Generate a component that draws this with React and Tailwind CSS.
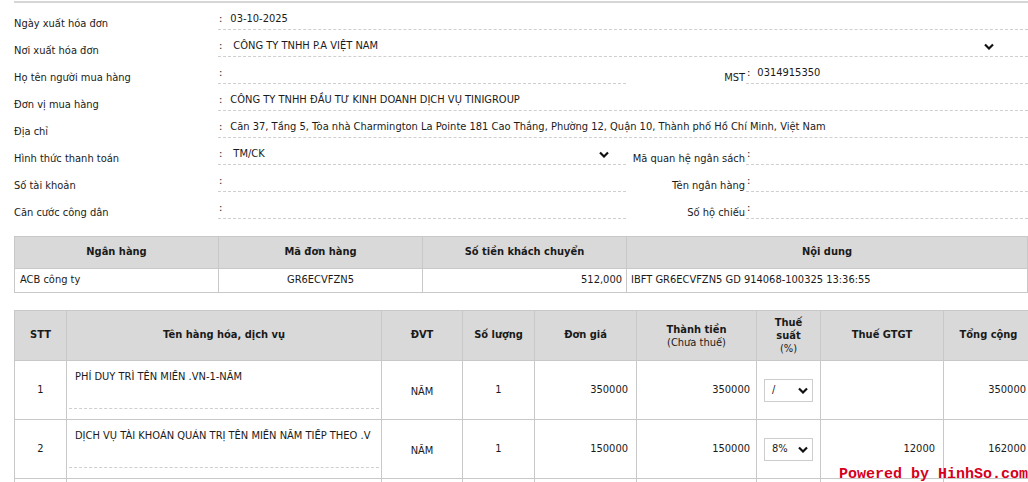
import React from "react";

const font = { fontFamily: '"DejaVu Sans Condensed", "Liberation Sans", sans-serif' };

function Chevron({ className = "" }) {
  return (
    <svg width="10" height="7" viewBox="0 0 10 7" className={className}>
      <path d="M1 1.5 L5 5.5 L9 1.5" fill="none" stroke="#111" strokeWidth="2.2" />
    </svg>
  );
}

function Label({ children, right }) {
  return (
    <div
      className={
        "shrink-0 pt-[14px] leading-[14px] whitespace-nowrap " +
        (right ? "w-[120px] text-right pr-[1px]" : "w-[204px]")
      }
    >
      {children}
    </div>
  );
}

function Value({ children, className = "", select, colonGap = "ml-[8px]" }) {
  return (
    <div
      className={
        "relative flex items-start pt-[9px] leading-[14px] border-b border-dashed border-[#cfcfcf] h-[27px] whitespace-nowrap " +
        className
      }
    >
      <span className="pl-[1px]">:</span>
      {children && <span className={colonGap}>{children}</span>}
      {select && <Chevron className={"absolute top-[13px] " + select} />}
    </div>
  );
}

function FormRow({ label, children }) {
  return (
    <div className="flex h-[27px]">
      <Label>{label}</Label>
      {children}
    </div>
  );
}

export default function App() {
  const head = "bg-[#d9d9d9] border border-[#c8c8c8] font-bold text-center";
  const cell = "border border-[#c8c8c8]";
  return (
    <div className="w-[1028px] h-[482px] overflow-hidden bg-white text-[11px] text-[#1a1a1a] relative" style={font}>
      <div className="w-[1040px] pl-[14px]">
        <div className="mt-px border-t-2 border-[#d6d6d6]">
          <FormRow label="Ngày xuất hóa đơn">
            <Value className="w-[810px]">03-10-2025</Value>
          </FormRow>
          <FormRow label="Nơi xuất hóa đơn">
            <Value className="w-[810px]" colonGap="ml-[11px]" select="left-[766px]">
              CÔNG TY TNHH P.A VIỆT NAM
            </Value>
          </FormRow>
          <FormRow label="Họ tên người mua hàng">
            <Value className="w-[408px]" />
            <Label right>MST</Label>
            <Value className="w-[282px]" colonGap="ml-[7px]">0314915350</Value>
          </FormRow>
          <FormRow label="Đơn vị mua hàng">
            <Value className="w-[810px]">CÔNG TY TNHH ĐẦU TƯ KINH DOANH DỊCH VỤ TINIGROUP</Value>
          </FormRow>
          <FormRow label="Địa chỉ">
            <Value className="w-[810px]">
              Căn 37, Tầng 5, Tòa nhà Charmington La Pointe 181 Cao Thắng, Phường 12, Quận 10, Thành phố Hồ Chí Minh, Việt Nam
            </Value>
          </FormRow>
          <FormRow label="Hình thức thanh toán">
            <Value className="w-[408px]" colonGap="ml-[11px]" select="left-[381px]">TM/CK</Value>
            <Label right>Mã quan hệ ngân sách</Label>
            <Value className="w-[282px]" />
          </FormRow>
          <FormRow label="Số tài khoản">
            <Value className="w-[408px]" />
            <Label right>Tên ngân hàng</Label>
            <Value className="w-[282px]" />
          </FormRow>
          <FormRow label="Căn cước công dân">
            <Value className="w-[408px]" />
            <Label right>Số hộ chiếu</Label>
            <Value className="w-[282px]" />
          </FormRow>
        </div>

        <table className="mt-[17px] w-[1014px] border-collapse">
          <colgroup>
            <col className="w-[204px]" />
            <col className="w-[204px]" />
            <col className="w-[204px]" />
            <col />
          </colgroup>
          <thead>
            <tr className="h-[32px]">
              <th className={head}>Ngân hàng</th>
              <th className={head}>Mã đơn hàng</th>
              <th className={head}>Số tiền khách chuyển</th>
              <th className={head}>Nội dung</th>
            </tr>
          </thead>
          <tbody>
            <tr className="h-[24px]">
              <td className={cell + " px-[5px]"}>ACB công ty</td>
              <td className={cell + " text-center"}>GR6ECVFZN5</td>
              <td className={cell + " text-right px-[4px]"}>512,000</td>
              <td className={cell + " px-[4px]"}>IBFT GR6ECVFZN5 GD 914068-100325 13:36:55</td>
            </tr>
          </tbody>
        </table>

        <table className="mt-[17px] w-[1020px] border-collapse">
          <colgroup>
            <col className="w-[52px]" />
            <col className="w-[315px]" />
            <col className="w-[81px]" />
            <col className="w-[72px]" />
            <col className="w-[102px]" />
            <col className="w-[120px]" />
            <col className="w-[63px]" />
            <col className="w-[123px]" />
            <col />
          </colgroup>
          <thead>
            <tr className="h-[50px]">
              <th className={head}>STT</th>
              <th className={head}>Tên hàng hóa, dịch vụ</th>
              <th className={head}>ĐVT</th>
              <th className={head}>Số lượng</th>
              <th className={head}>Đơn giá</th>
              <th className={head + " leading-[13px]"}>
                Thành tiền
                <div className="font-normal">(Chưa thuế)</div>
              </th>
              <th className={head + " leading-[13px]"}>
                Thuế
                <br />
                suất
                <div className="font-normal">(%)</div>
              </th>
              <th className={head}>Thuế GTGT</th>
              <th className={head}>Tổng cộng</th>
            </tr>
          </thead>
          <tbody>
            {[
              ["1", "PHÍ DUY TRÌ TÊN MIỀN .VN-1-NĂM", "350000", "350000", "/", "", "350000"],
              ["2", "DỊCH VỤ TÀI KHOẢN QUẢN TRỊ TÊN MIỀN NĂM TIẾP THEO .V", "150000", "150000", "8%", "12000", "162000"],
              ["", "", "", "", "", "", ""],
            ].map((r, i) => (
              <tr key={i} className="h-[59px]">
                <td className={cell + " text-center"}>{r[0]}</td>
                <td className={cell + " align-top px-[2px] pt-[9px]"}>
                  {i < 2 ? (
                    <div className="h-[39px] border-b border-dashed border-[#cfcfcf] px-[6px] leading-[14px] whitespace-nowrap overflow-hidden">
                      {r[1]}
                    </div>
                  ) : null}
                </td>
                <td className={cell + " text-center pt-[4px]"}>{i < 2 ? "NĂM" : ""}</td>
                <td className={cell + " text-center"}>{i < 2 ? "1" : ""}</td>
                <td className={cell + " text-right pr-[8px]"}>{r[2]}</td>
                <td className={cell + " text-right pr-[6px]"}>{r[3]}</td>
                <td className={cell + " px-[7px]"}>
                  {i < 2 && (
                    <div className="flex items-center justify-between h-[23px] w-[49px] border border-[#cdcdcd] pl-[7px] pr-[4px]">
                      <span>{r[4]}</span>
                      <Chevron />
                    </div>
                  )}
                </td>
                <td className={cell + " text-right pr-[8px]"}>{r[5]}</td>
                <td className={cell + " text-right pr-[7px]"}>{r[6]}</td>
              </tr>
            ))}
          </tbody>
        </table>
      </div>

      <div
        className="absolute right-0 bottom-0 text-[15px] font-bold leading-[15px] text-[#d6001c]"
        style={{ fontFamily: '"Liberation Mono", "Courier New", monospace' }}
      >
        Powered by HinhSo.com
      </div>
    </div>
  );
}
